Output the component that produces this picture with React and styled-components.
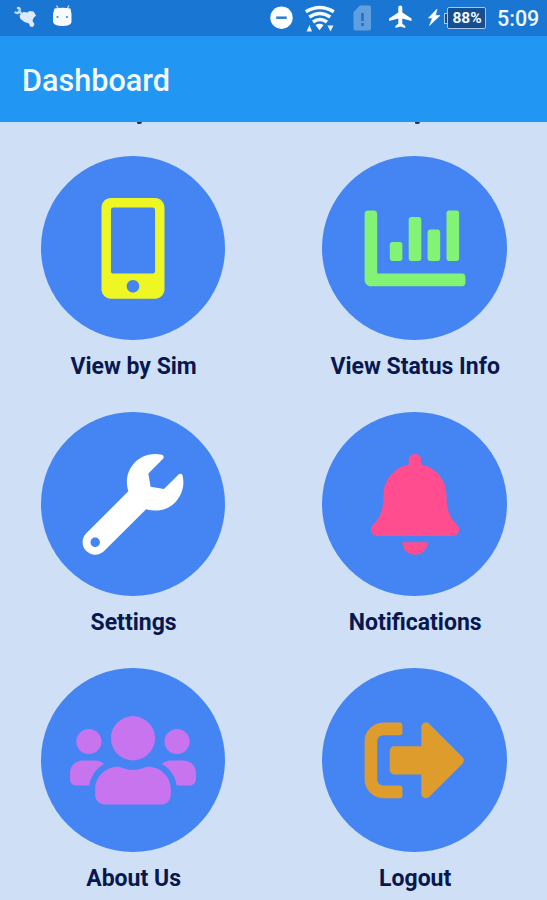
import React from 'react';
import styled, { createGlobalStyle } from 'styled-components';
import { FaMobileAlt, FaChartBar, FaWrench, FaBell, FaUsers, FaSignOutAlt } from 'react-icons/fa';

const GlobalStyle = createGlobalStyle`
  * { box-sizing: border-box; }
  body { margin: 0; overflow: hidden; background: #cfdff6; font-family: Roboto, sans-serif; }
`;

const Screen = styled.div`
  width: 547px;
  height: 900px;
  overflow: hidden;
  display: flex;
  flex-direction: column;
  background: #cfdff6;
`;

const StatusBar = styled.div`
  flex: none;
  height: 36px;
  display: flex;
  justify-content: space-between;
  background: #1976d2;
`;

const StatusGlyphs = styled.svg`
  display: block;
  flex: none;
  width: ${(p) => p.$width}px;
  height: 36px;
`;

const StatusRight = styled.div`
  display: flex;
  align-items: center;
  padding-right: 7px;
`;

const Battery = styled.div`
  width: 39px;
  height: 22px;
  margin-left: 3px;
  padding-left: 1px;
  display: flex;
  align-items: center;
  justify-content: center;
  border: 1.5px solid #a9c8ed;
  border-radius: 2px;
  background: #164f8f;
  color: #f4f9ff;
  font-size: 15.5px;
  font-weight: 700;
  line-height: 18px;
`;

const BatteryTip = styled.div`
  width: 4px;
  height: 11px;
  margin-right: -4px;
  border: 1.5px solid #a9c8ed;
  border-right: 0;
  background: #164f8f;
`;

const Clock = styled.div`
  width: 43px;
  margin-left: 11px;
  padding-top: 1px;
  color: #f0f7ff;
  font-size: 21.5px;
  font-weight: 500;
  line-height: 36px;
  white-space: nowrap;
`;

const AppBar = styled.header`
  flex: none;
  height: 86px;
  padding: 3px 0 0 22px;
  display: flex;
  align-items: center;
  background: #2196f3;
`;

const Title = styled.h1`
  margin: 0;
  color: #f2faff;
  font-size: 30.6px;
  font-weight: 500;
  line-height: 41px;
`;

const ClippedRow = styled.div`
  flex: none;
  height: 33.6px;
  display: flex;
  gap: 273px;
  padding-left: 137px;
`;

const Descender = styled.span`
  width: 5px;
  height: 2px;
  border-radius: 0 0 3px 2px;
  background: #1c3568;
`;

const Grid = styled.main`
  display: grid;
  grid-template-columns: 184.8px 184.8px;
  grid-auto-rows: 256px;
  column-gap: 96.8px;
  padding-left: 40.7px;
`;

const Tile = styled.div`
  display: flex;
  flex-direction: column;
  align-items: center;
`;

const Disc = styled.div`
  width: 184.8px;
  height: 184.6px;
  display: flex;
  align-items: center;
  justify-content: center;
  padding-top: 1.4px;
  border-radius: 50%;
  background: #4485f3;
  color: ${(p) => p.$color};

  svg { display: block; width: 126px; height: 100.8px; }
`;

const Label = styled.div`
  margin-top: 12px;
  padding-left: 1px;
  color: #07184f;
  font-size: 23px;
  font-weight: 700;
  line-height: 30px;
  white-space: nowrap;
`;

const tiles = [
  { label: 'View by Sim', Icon: FaMobileAlt, color: '#eef724' },
  { label: 'View Status Info', Icon: FaChartBar, color: '#83f375' },
  { label: 'Settings', Icon: FaWrench, color: '#ffffff' },
  { label: 'Notifications', Icon: FaBell, color: '#ff4d8f' },
  { label: 'About Us', Icon: FaUsers, color: '#c774ee' },
  { label: 'Logout', Icon: FaSignOutAlt, color: '#de9c2d' },
];

function NotificationGlyphs() {
  return (
    <StatusGlyphs $width={90} viewBox="0 0 90 36">
      <path d="M15.500 12.500q3 1.500 4-1.500t-1.500-3M19.500 11.500l4 4" fill="none" stroke="#c3daf4" strokeWidth="2.400" strokeLinecap="round" />
      <path d="M19.500 15.500l4-3.500 4 .5 2-1.500 4 .5 2.500 4-2.500 2.500-1 3 2 3-1.500 3-3-.5-1-3-4.500-1.500-4-3z" fill="#dceafb" />
      <path d="M56.500 5.500l2 3.500M69 5.500l-2 3.500" stroke="#b3d1f1" strokeWidth="1.400" />
      <path d="M54.500 8.500q8-1.500 16 0l1 5.500v8q-.5 4-9 4t-9.500-4v-8z" fill="#f7fbff" />
      <circle cx="57.500" cy="17" r="1.100" fill="#4486cc" />
      <circle cx="67" cy="17" r="1.100" fill="#4486cc" />
    </StatusGlyphs>
  );
}

function SystemGlyphs() {
  return (
    <StatusGlyphs $width={174} viewBox="270 0 174 36">
      <circle cx="281.500" cy="17.700" r="11.200" fill="#fff" />
      <path d="M276.200 17.700h10.500" stroke="#2a7ed3" strokeWidth="2.500" />
      <g fill="none" stroke="#f6faff" strokeWidth="3.600">
        <path d="M305.800 11.800q14-8.500 28 0" />
        <path d="M309.300 17q10.500-7 21 0" />
        <path d="M313 22q7-5 14 0" />
      </g>
      <path d="M315.500 25q4-2.500 8 0l-4 5.300z" fill="#fff" />
      <path d="M306.500 31.500l3-6.500 2.500 6.500zM327.500 25.500h6l-3 6z" fill="#e7f2ff" />
      <path d="M360 5.500h9q2 0 2 2v21q0 2-2 2h-13.500q-2 0-2-2V12z" fill="#609fdf" />
      <path d="M362.500 13v8M362.500 23v3" stroke="#2972bd" strokeWidth="2.700" />
      <path d="M411.500 21v-2.600l-9.200-5.800V7.500a2 2 0 0 0-4 0v5.100l-9.200 5.800V21l9.200-2.600v5.400l-2.900 2.200v2l4.900-1.400 4.900 1.400v-2l-2.900-2.200v-5.400z" fill="#fff" />
      <path d="M437 9l-8.500 9h4l-3 7.500 10.500-10h-4.500z" fill="#fff" stroke="#fff" strokeWidth=".6" />
    </StatusGlyphs>
  );
}

export default function App() {
  return (
    <Screen>
      <GlobalStyle />
      <StatusBar>
        <NotificationGlyphs />
        <StatusRight>
          <SystemGlyphs />
          <BatteryTip />
          <Battery>88%</Battery>
          <Clock>5:09</Clock>
        </StatusRight>
      </StatusBar>
      <AppBar>
        <Title>Dashboard</Title>
      </AppBar>
      <ClippedRow>
        <Descender />
        <Descender />
      </ClippedRow>
      <Grid>
        {tiles.map(({ label, Icon, color }) => (
          <Tile key={label}>
            <Disc $color={color}>
              <Icon />
            </Disc>
            <Label>{label}</Label>
          </Tile>
        ))}
      </Grid>
    </Screen>
  );
}
